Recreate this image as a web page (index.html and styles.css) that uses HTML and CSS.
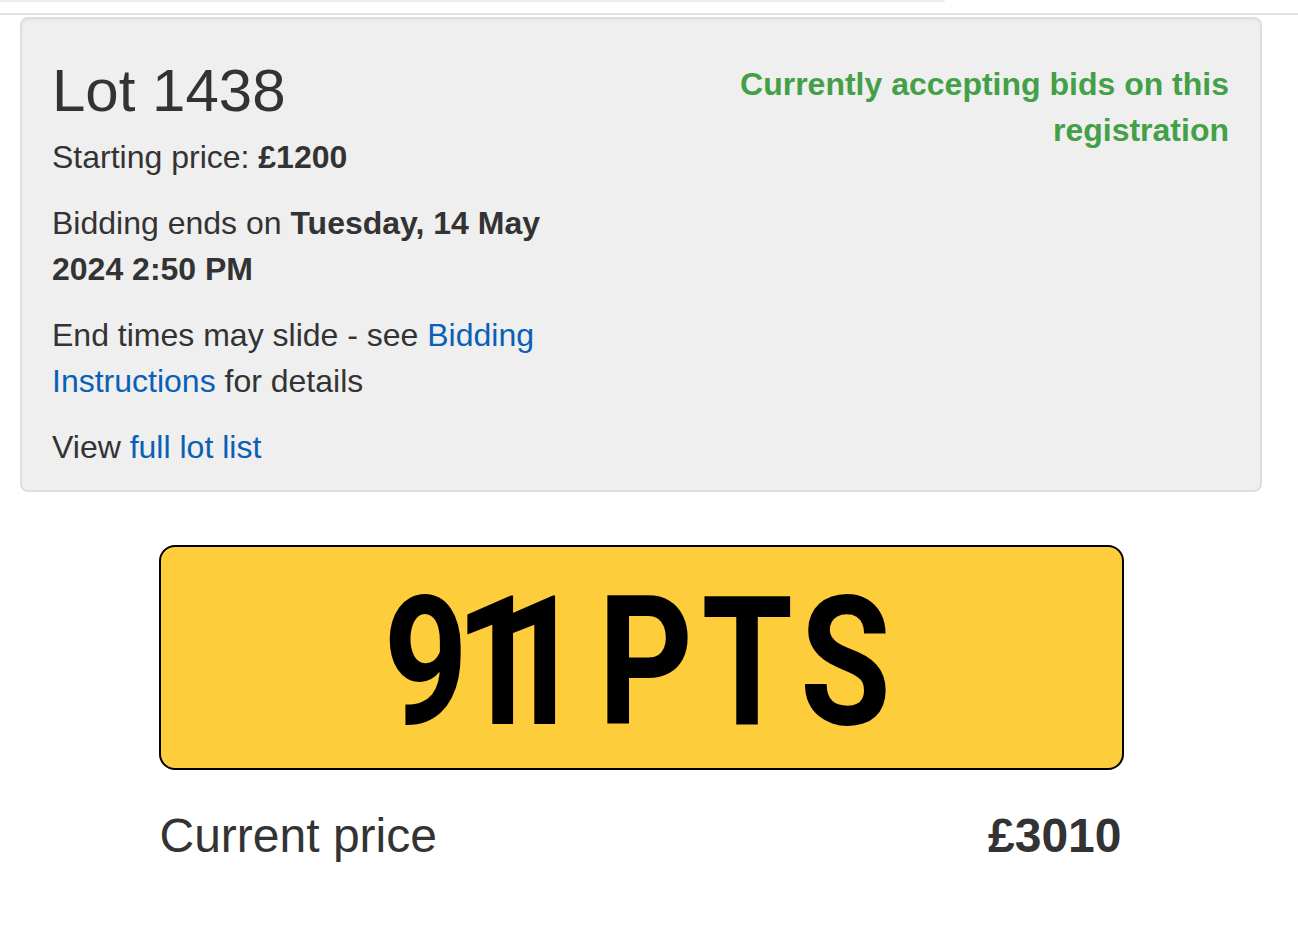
FILE: index.html
```html
<!DOCTYPE html>
<html lang="en-GB">
<head>
    <meta charset="UTF-8">
    <meta name="viewport" content="width=device-width, initial-scale=1.0">
    <title>Lot 1438 - 911 PTS</title>
    <link rel="stylesheet" href="styles.css">
</head>
<body>
<!-- Barra superior -->
<div class="topbar">
    <div class="topbar-strip"></div>
</div>

<main class="page">
    <!-- Resumo do lote -->
    <section class="lot-panel">
        <div class="lot-info">
            <h1>Lot 1438</h1>
            <p>Starting price: <strong>£1200</strong></p>
            <p>Bidding ends on <strong>Tuesday, 14 May 2024 2:50 PM</strong></p>
            <p>End times may slide - see <a href="#">Bidding Instructions</a> for details</p>
            <p>View <a href="#">full lot list</a></p>
        </div>
        <div class="lot-status">
            <p class="status-open">Currently accepting bids on this registration</p>
        </div>
    </section>

    <!-- Placa e preço atual -->
    <section class="plate-block">
        <div class="plate">
            <span class="plate-text">9<span class="plate-ones">11</span> PTS</span>
        </div>
        <div class="price-row">
            <h3>Current price</h3>
            <h3 class="price-value">£3010</h3>
        </div>
    </section>
</main>
</body>
</html>
```

FILE: styles.css
```css
body {
    margin: 0;
    padding: 0;
    font-family: "Liberation Sans", Arial, sans-serif;
    font-size: 32px;
    line-height: 46px;
    color: #333333;
    background-color: #FFFFFF;
}

/* Barra superior */
.topbar {
    height: 13px;
    border-bottom: 2px solid #e2e2e2;
}

.topbar-strip {
    width: 945px;
    height: 2px;
    background-color: #e8edf2;
    border-radius: 0 2px 2px 0;
}

.page {
    padding: 2px 36px 40px 20px;
}

a {
    color: #0a60b6;
    text-decoration: none;
}

p {
    margin: 0 0 20px;
}

/* Painel cinza com os dados do lote */
.lot-panel {
    display: grid;
    grid-template-columns: 500px 1fr;
    padding: 19px 31px 0 30px;
    background-color: #efefef;
    border: 2px solid #dedede;
    border-radius: 8px;
    box-shadow: inset 0 2px 2px rgba(0, 0, 0, 0.03);
}

.lot-info h1 {
    margin: 20px 0 10px;
    font-size: 60px;
    font-weight: 500;
    line-height: 1.1;
}

.lot-status {
    justify-self: end;
    max-width: 520px;
    text-align: right;
}

.status-open {
    margin-top: 23px;
    color: #43a047;
    font-weight: bold;
}

/* Placa amarela */
.plate-block {
    width: 965px;
    margin: 53px auto 0;
}

.plate {
    display: flex;
    align-items: center;
    justify-content: center;
    box-sizing: border-box;
    height: 225px;
    padding-top: 10px;
    background-color: #fecd3c;
    border: 2px solid #000000;
    border-radius: 16px;
}

.plate-text {
    display: inline-block;
    font-family: Roboto, "Liberation Sans", sans-serif;
    font-size: 180px;
    font-weight: bold;
    line-height: 1;
    letter-spacing: 10px;
    word-spacing: 17px;
    color: #000000;
    transform: scaleX(0.82);
}

/* Os dois "1" ficam bem juntos na placa */
.plate-ones {
    margin-left: -26px;
    letter-spacing: -52px;
}

.price-row {
    display: flex;
    justify-content: space-between;
    padding: 0 2px 0 1px;
}

.price-row h3 {
    margin: 40px 0 0;
    font-size: 48px;
    font-weight: 500;
    line-height: 1.1;
}

.price-row .price-value {
    font-weight: bold;
}
```
